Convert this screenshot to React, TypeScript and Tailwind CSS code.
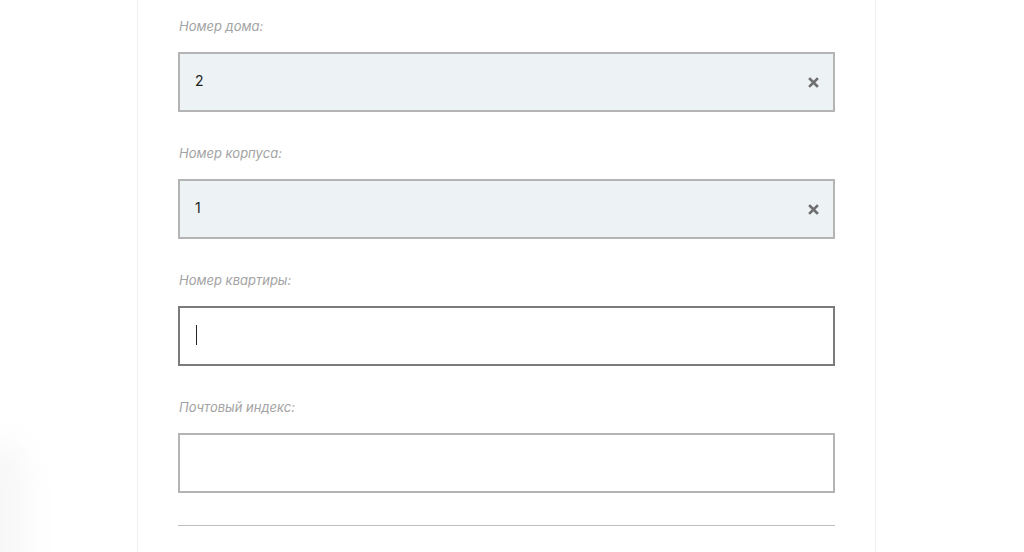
import { useState } from "react";

type Field = {
  label: string;
  value: string;
  focused?: boolean;
};

const fields: Field[] = [
  { label: "Номер дома:", value: "2" },
  { label: "Номер корпуса:", value: "1" },
  { label: "Номер квартиры:", value: "", focused: true },
  { label: "Почтовый индекс:", value: "" },
];

function ClearIcon() {
  return (
    <svg width="11" height="11" viewBox="0 0 11 11" className="text-[#6f6f6f]">
      <path d="M2 2 L9 9 M9 2 L2 9" stroke="currentColor" strokeWidth="2.6" strokeLinecap="square" />
    </svg>
  );
}

function AddressField({ field }: { field: Field }) {
  const [value, setValue] = useState(field.value);
  const filled = value.length > 0;

  return (
    <div className="pb-[31px]">
      <div className="h-5 pl-px text-[13px] leading-5 italic text-[#a3a3a3]">{field.label}</div>
      <div
        className={
          field.focused
            ? "mt-4 h-[60px] border-2 border-[#7b7b7b] bg-white flex items-center pl-4 pr-[14px]"
            : filled
              ? "mt-4 h-[60px] border-2 border-[#b4b4b4] bg-[#edf2f5] flex items-center pl-4 pr-[14px]"
              : "mt-4 h-[60px] border-2 border-[#b4b4b4] bg-white flex items-center pl-4 pr-[14px]"
        }
      >
        {field.focused ? (
          <span className="block w-px h-[20px] mb-[2px] bg-[#222]" />
        ) : (
          <input
            value={value}
            onChange={(e) => setValue(e.target.value)}
            className="flex-1 -ml-px mb-[3px] bg-transparent outline-none text-[14px] text-[#222]"
          />
        )}
        {filled && !field.focused && (
          <button onClick={() => setValue("")} className="ml-auto flex items-center">
            <ClearIcon />
          </button>
        )}
      </div>
    </div>
  );
}

export default function App() {
  return (
    <div className="relative h-[552px] w-[1024px] overflow-hidden bg-white font-['Inter','Open_Sans',sans-serif]">
      {/* soft shade peeking in at the bottom-left corner */}
      <div className="absolute -left-[26px] -bottom-[70px] h-[180px] w-[50px] rounded-full bg-[#eeeeee] blur-lg opacity-50" />
      <div className="relative ml-[137px] w-[739px] h-full bg-white border-x border-[#efefef] px-10 pt-4">
        {fields.map((f) => (
          <AddressField key={f.label} field={f} />
        ))}
        <div className="mt-px h-px bg-[#bdbdbd]" />
      </div>
    </div>
  );
}
